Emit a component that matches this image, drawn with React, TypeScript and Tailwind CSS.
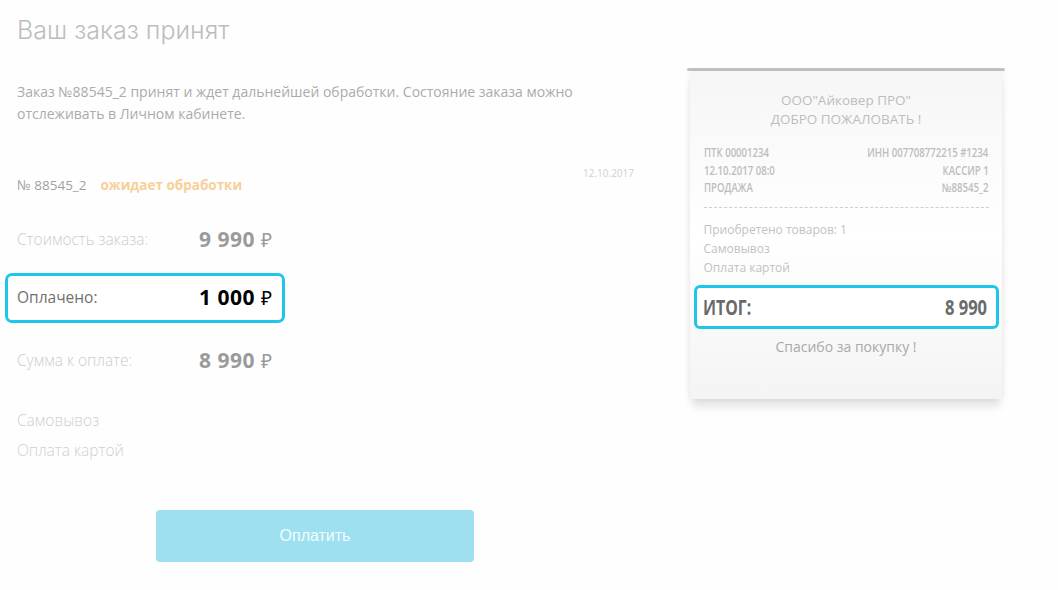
import React from "react";

const os = { fontFamily: '"Open Sans", "Noto Sans", sans-serif' };
const cond = { fontFamily: '"Open Sans", "DejaVu Sans", sans-serif' };

function Amount({ value, dark }: { value: string; dark?: boolean }) {
  return (
    <div className={`flex items-baseline gap-[6px] ${dark ? "text-black" : "text-[#9a9a9a]"}`}>
      <span className="text-[21px] font-bold tracking-[0.5px]">{value}</span>
      <span className="text-[19px] font-normal">₽</span>
    </div>
  );
}

function MetaRow({ l, r }: { l: string; r: string }) {
  return (
    <div className="flex justify-between">
      <span className="inline-block origin-left scale-x-[0.8] whitespace-nowrap">{l}</span>
      <span className="inline-block origin-right scale-x-[0.8] whitespace-nowrap">{r}</span>
    </div>
  );
}

export default function App() {
  return (
    <div className="w-[1058px] h-[590px] bg-[#fefefe] overflow-hidden flex" style={os}>
      <div className="w-[660px] pl-[17px] pt-[14px] flex flex-col">
        <h1 className="text-[25px] font-light text-[#bdbdbd] leading-[32px]" style={{ fontFamily: '"Inter", "Open Sans", sans-serif', fontWeight: 300 }}>
          Ваш заказ принят
        </h1>
        <p className="mt-[35px] text-[14px] leading-[22px] text-[#ababab] w-[600px]">
          Заказ №88545_2 принят и ждет дальнейшей обработки. Состояние заказа можно отслеживать в Личном кабинете.
        </p>
        <div className="mt-[41px] flex items-end">
          <div className="flex items-baseline gap-[14px] text-[13.5px]">
            <span className="text-[#a2a2a2]">№ 88545_2</span>
            <span className="font-bold text-[#f9cf98]">ожидает обработки</span>
          </div>
          <span className="ml-auto mr-[26px] mb-[14px] text-[10px] text-[#d0d0d0]">12.10.2017</span>
        </div>
        <div className="mt-[30px] w-[255px] flex items-center justify-between h-[30px]">
          <span className="text-[15.5px] text-[#cccccc] font-light">Стоимость заказа:</span>
          <Amount value="9 990" />
        </div>
        <div className="mt-[18px] -ml-[12px] w-[280px] h-[50px] border-[3px] border-[#1ec6ea] rounded-[7px] pl-[9px] pr-[10px] flex items-center justify-between bg-white">
          <span className="text-[15.5px] text-[#6f6f6f]">Оплачено:</span>
          <Amount value="1 000" dark />
        </div>
        <div className="mt-[23px] w-[255px] flex items-center justify-between h-[30px]">
          <span className="text-[15.5px] text-[#cccccc] font-light">Сумма к оплате:</span>
          <Amount value="8 990" />
        </div>
        <div className="mt-[33px] flex flex-col gap-[8px] text-[15.5px] text-[#cfcfcf] font-light leading-[22px]">
          <span>Самовывоз</span>
          <span>Оплата картой</span>
        </div>
        <div className="mt-[49px] ml-[139px] w-[318px] h-[52px] rounded-[4px] bg-[#9ee0ef] flex items-center justify-center">
          <span className="text-[16px] text-[#f4fcfe]" style={{ fontFamily: '"Liberation Sans", Arial, sans-serif' }}>Оплатить</span>
        </div>
      </div>

      <div className="pt-[68px] pl-[27px]">
        <div className="w-[318px] h-[3px] rounded-full bg-[#c4c4c4]" />
        <div className="mx-[3px] w-[312px] flex flex-col items-center shadow-[0_10px_8px_-2px_rgba(0,0,0,0.10),2px_0_6px_rgba(0,0,0,0.04),-2px_0_6px_rgba(0,0,0,0.04)] bg-gradient-to-b from-[#f6f6f6] via-white to-[#f4f4f4]">
          <div className="pt-[20px] text-center text-[13.5px] leading-[19px] text-[#bdbdbd]">
            <div>ООО"Айковер ПРО"</div>
            <div>ДОБРО ПОЖАЛОВАТЬ !</div>
          </div>
          <div className="mt-[15px] w-[285px] flex flex-col text-[12px] leading-[17.5px] font-semibold text-[#bdbdbd]" style={cond}>
            <MetaRow l="ПТК 00001234" r="ИНН 007708772215 #1234" />
            <MetaRow l="12.10.2017 08:0" r="КАССИР 1" />
            <MetaRow l="ПРОДАЖА" r="№88545_2" />
          </div>
          <div className="mt-[10px] w-[285px] border-t-[1.5px] border-dashed border-[#cfcfcf]" />
          <div className="mt-[12px] w-[285px] flex flex-col text-[12px] leading-[19px] text-[#c2c2c2]">
            <span>Приобретено товаров: 1</span>
            <span>Самовывоз</span>
            <span>Оплата картой</span>
          </div>
          <div className="mt-[8px] w-[305px] h-[44px] border-[3px] border-[#1ec6ea] rounded-[6px] px-[6px] pr-[8px] flex items-center justify-between bg-white text-[22px] font-bold text-[#6a6a6a]" style={cond}>
            <span className="inline-block origin-left scale-x-[0.72] whitespace-nowrap">ИТОГ:</span>
            <span className="inline-block origin-right scale-x-[0.75] whitespace-nowrap">8 990</span>
          </div>
          <div className="mt-[7px] text-[14px] text-[#a9a9a9]">Спасибо за покупку !</div>
          <div className="h-[42px]" />
        </div>
      </div>
    </div>
  );
}
